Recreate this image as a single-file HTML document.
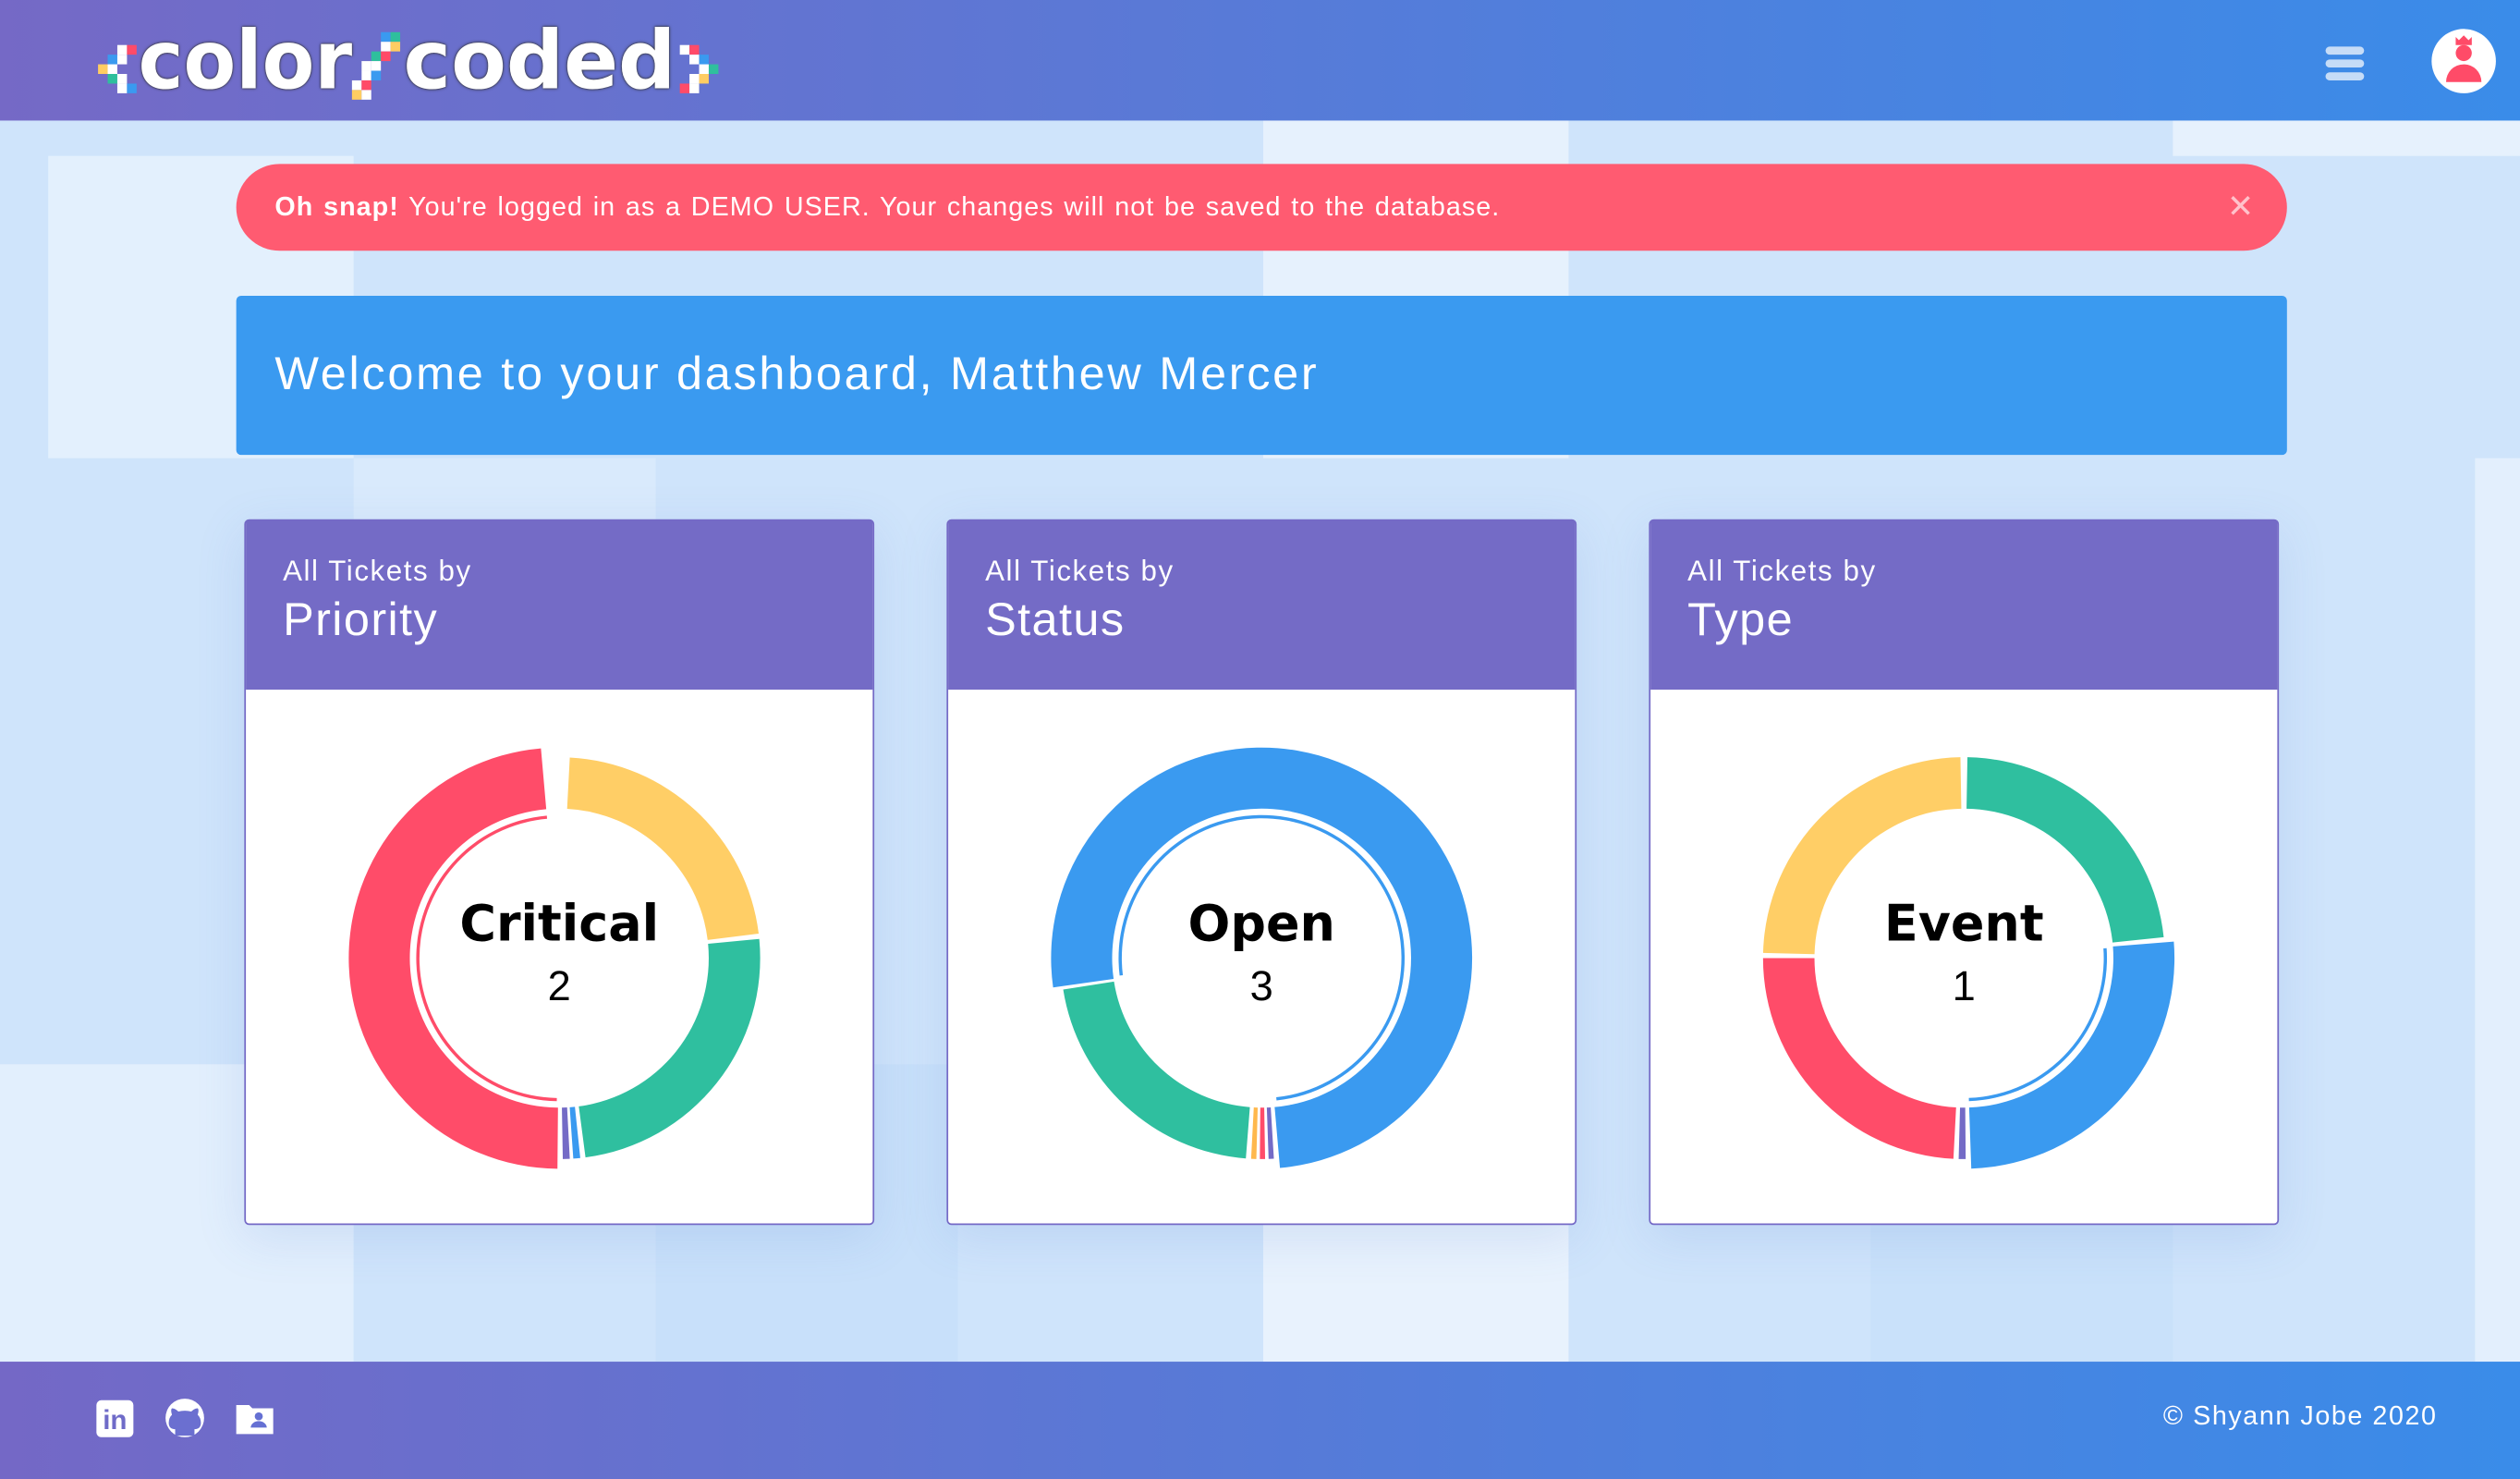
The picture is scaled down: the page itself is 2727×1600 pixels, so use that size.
<!DOCTYPE html>
<html><head><meta charset="utf-8"><style>
html,body{margin:0;padding:0;width:2727px;height:1600px;overflow:hidden;background:#d3e7fb}
#s{position:absolute;left:0;top:0;width:1568px;height:920px;transform:scale(1.73916);transform-origin:0 0;font-family:"Liberation Sans",sans-serif;overflow:hidden;background:#d0e5fb}
.t{position:absolute}
.hdr{position:absolute;left:0;top:0;width:1568px;height:75px;background:linear-gradient(90deg,#7569c6,#3a8ce9)}
.ftr{position:absolute;left:0;top:847px;width:1568px;height:73px;background:linear-gradient(90deg,#7468c6,#3a8ce9)}
.alert{position:absolute;left:147px;top:102px;width:1276px;height:54px;border-radius:27px;background:#ff5b71;color:#fff;font-size:16.5px;line-height:54px;box-sizing:border-box;padding-left:24px;letter-spacing:.6px;word-spacing:1px}
.wel{position:absolute;left:147px;top:184px;width:1276px;height:99px;background:#3a9af0;border-radius:3px;color:#fff;font-size:29px;line-height:99px;box-sizing:border-box;padding-left:24px;letter-spacing:1.55px}
.card{position:absolute;top:323px;width:392px;height:439px;background:#fff;border:1px solid #7469c6;box-sizing:border-box;border-radius:3px;box-shadow:0 8px 30px rgba(80,120,200,.15)}
.ch{height:105px;background:#746bc6;color:#fff;padding:21px 0 0 23px;box-sizing:border-box}
.ch .a{font-size:18px;letter-spacing:.9px}
.ch .b{font-size:29px;margin-top:4px;letter-spacing:.8px}
svg{position:absolute;left:0;top:0}
.lg{position:absolute;top:9px;color:#fff;font-size:50px;font-family:'DejaVu Sans',sans-serif;font-weight:bold;transform-origin:0 0;text-shadow:0 0 2px #333,0 0 1px #333}
.px{position:absolute;width:6px;height:6px}
.c{text-align:center;font-family:"DejaVu Sans","Liberation Sans",sans-serif}
</style></head><body><div id="s">
<div class="t" style="left:0;top:75px;width:1568px;height:772px;background:#cfe4fb"></div>
<div class="t" style="left:30px;top:97px;width:190px;height:188px;background:#e3f0fd"></div>
<div class="t" style="left:220px;top:285px;width:188px;height:377px;background:#d9eafc"></div>
<div class="t" style="left:408px;top:662px;width:188px;height:185px;background:#c8e0fa"></div>
<div class="t" style="left:786px;top:75px;width:190px;height:210px;background:#e6f1fd"></div>
<div class="t" style="left:0;top:662px;width:220px;height:185px;background:#e2effd"></div>
<div class="t" style="left:786px;top:662px;width:190px;height:185px;background:#e8f2fd"></div>
<div class="t" style="left:1352px;top:75px;width:216px;height:22px;background:#e6f1fd"></div>
<div class="t" style="left:1540px;top:285px;width:28px;height:562px;background:#e3effd"></div>
<div class="t" style="left:1164px;top:662px;width:188px;height:185px;background:#c9e1fa"></div>
<div class="hdr"></div>
<div class="lg" style="left:86px;transform:scaleX(0.95)">color</div>
<div class="lg" style="left:251px;transform:scaleX(1.0)">coded</div>
<!-- left brace -->
<div class="px" style="left:73px;top:28px;background:#fff"></div><div class="px" style="left:79px;top:28px;background:#ff4b68"></div>
<div class="px" style="left:67px;top:34px;background:#3a9af0"></div><div class="px" style="left:73px;top:34px;background:#fff"></div>
<div class="px" style="left:61px;top:40px;background:#ffcd62"></div><div class="px" style="left:67px;top:40px;background:#fff"></div>
<div class="px" style="left:67px;top:46px;background:#2fbf9d"></div><div class="px" style="left:73px;top:46px;background:#fff"></div>
<div class="px" style="left:73px;top:52px;background:#fff"></div><div class="px" style="left:79px;top:52px;background:#3a9af0"></div>
<!-- middle -->
<div class="px" style="left:237px;top:20px;background:#3a9af0"></div><div class="px" style="left:243px;top:20px;background:#2fbf9d"></div>
<div class="px" style="left:237px;top:26px;background:#fff"></div><div class="px" style="left:243px;top:26px;background:#ffcd62"></div>
<div class="px" style="left:231px;top:32px;background:#2fbf9d"></div><div class="px" style="left:237px;top:32px;background:#ff4b68"></div>
<div class="px" style="left:225px;top:38px;background:#fff"></div><div class="px" style="left:231px;top:38px;background:#fff"></div>
<div class="px" style="left:225px;top:44px;background:#fff"></div><div class="px" style="left:231px;top:44px;background:#3a9af0"></div>
<div class="px" style="left:219px;top:50px;background:#fff"></div><div class="px" style="left:225px;top:50px;background:#ff4b68"></div>
<div class="px" style="left:219px;top:56px;background:#ffcd62"></div><div class="px" style="left:225px;top:56px;background:#fff"></div>
<!-- right brace -->
<div class="px" style="left:423px;top:28px;background:#fff"></div><div class="px" style="left:429px;top:28px;background:#ff4b68"></div>
<div class="px" style="left:429px;top:34px;background:#fff"></div><div class="px" style="left:435px;top:34px;background:#3a9af0"></div>
<div class="px" style="left:435px;top:40px;background:#fff"></div><div class="px" style="left:441px;top:40px;background:#2fbf9d"></div>
<div class="px" style="left:429px;top:46px;background:#fff"></div><div class="px" style="left:435px;top:46px;background:#ffcd62"></div>
<div class="px" style="left:423px;top:52px;background:#ff4b68"></div><div class="px" style="left:429px;top:52px;background:#fff"></div>
<div class="t" style="left:1447px;top:29px;width:24px;height:5px;border-radius:3px;background:#c6dcf7"></div>
<div class="t" style="left:1447px;top:37px;width:24px;height:5px;border-radius:3px;background:#c6dcf7"></div>
<div class="t" style="left:1447px;top:45px;width:24px;height:5px;border-radius:3px;background:#c6dcf7"></div>
<div class="t" style="left:1513px;top:18px;width:40px;height:40px;border-radius:50%;background:#fff"></div>
<svg width="1568" height="920" style="pointer-events:none"><g fill="#ff4b68"><circle cx="1533" cy="33" r="5"/><path d="M1522 51 a11 11 0 0 1 22 0z"/><path d="M1528 28 l0-5 2 2 3-3 3 3 2-2 0 5z"/></g></svg>
<div class="alert"><b>Oh snap!</b> You're logged in as a DEMO USER. Your changes will not be saved to the database.<span style="position:absolute;right:20px;top:0;font-size:20px;color:#ffc2cb">✕</span></div>
<div class="wel">Welcome to your dashboard, Matthew Mercer</div>
<div class="card" style="left:152px"><div class="ch"><div class="a">All Tickets by</div><div class="b">Priority</div></div></div>
<div class="card" style="left:589px"><div class="ch"><div class="a">All Tickets by</div><div class="b">Status</div></div></div>
<div class="card" style="left:1026px"><div class="ch"><div class="a">All Tickets by</div><div class="b">Type</div></div></div>
<svg id="d" width="1568" height="920"></svg>
<div class="t c" style="left:248px;top:557px;width:200px;font-size:31px;font-weight:bold">Critical</div>
<div class="t" style="left:248px;top:598px;width:200px;text-align:center;font-size:26px">2</div>
<div class="t c" style="left:685px;top:557px;width:200px;font-size:31px;font-weight:bold">Open</div>
<div class="t" style="left:685px;top:598px;width:200px;text-align:center;font-size:26px">3</div>
<div class="t c" style="left:1122px;top:557px;width:200px;font-size:31px;font-weight:bold">Event</div>
<div class="t" style="left:1122px;top:598px;width:200px;text-align:center;font-size:26px">1</div>
<div class="ftr"></div>
<div class="t" style="left:60px;top:871px;width:23px;height:23px;border-radius:3px;background:#fff;color:#6f6bc8;font-weight:bold;font-size:17px;line-height:25px;text-align:center">in</div>
<svg width="1568" height="920"><circle cx="115" cy="882" r="12" fill="#fff"/><path d="M109 893 v-4 q-4 0 -4-4 q0-3 2-5 q-1-3 0-4 q2 0 4 2 q4-1 8 0 q2-2 4-2 q1 1 0 4 q2 2 2 5 q0 4-4 4 v4z" fill="#6b6fd0"/>
<path d="M147 874 h8 l2 2 h13 v16 h-23z" fill="#fff"/><circle cx="161" cy="881" r="2.5" fill="#6570d3"/><path d="M156 888 a5 4 0 0 1 10 0z" fill="#6570d3"/></svg>
<div class="t" style="left:1346px;top:872px;color:#fff;font-size:16.5px;letter-spacing:.9px">© Shyann Jobe 2020</div>
</div>
<script>
var s=document.getElementById('d'),ns='http://www.w3.org/2000/svg';
function arc(cx,cy,r1,r2,a0,a1,c){var R=Math.PI/180;function p(r,a){return [cx+r*Math.sin(a*R),cy-r*Math.cos(a*R)]}
var l=(a1-a0)>180?1:0,A=p(r2,a0),B=p(r2,a1),C=p(r1,a1),D=p(r1,a0);
var e=document.createElementNS(ns,'path');e.setAttribute('d','M'+A+' A'+r2+' '+r2+' 0 '+l+' 1 '+B+' L'+C+' A'+r1+' '+r1+' 0 '+l+' 0 '+D+'Z');e.setAttribute('fill',c);s.appendChild(e);}
var Y='#ffce66',G='#2fbf9f',Rd='#ff4c69',Bl='#3a9af0',P='#746bc6',O='#ffb84d';
arc(348,596,93,125,3,83,Y);arc(348,596,93,125,84.5,172.5,G);arc(348,596,93,125,174,176,Bl);arc(348,596,93,125,177,179,P);
arc(348,596,93,131,180.5,355,Rd);arc(348,596,87,89,181,355,Rd);
arc(785,596,93,131,262,535,Bl);arc(785,596,87,89,263,534,Bl);arc(785,596,93,125,176.5,178,P);arc(785,596,93,125,179,180.5,Rd);arc(785,596,93,125,181.5,183,O);arc(785,596,93,125,184.5,261,G);
arc(1222,596,93,125,1,84,G);arc(1222,596,93,131,85.5,178,Bl);arc(1222,596,87,89,86,178,Bl);arc(1222,596,93,125,179.5,181.5,P);arc(1222,596,93,125,183,270,Rd);arc(1222,596,93,125,271.5,359,Y);
</script>
</body></html>
